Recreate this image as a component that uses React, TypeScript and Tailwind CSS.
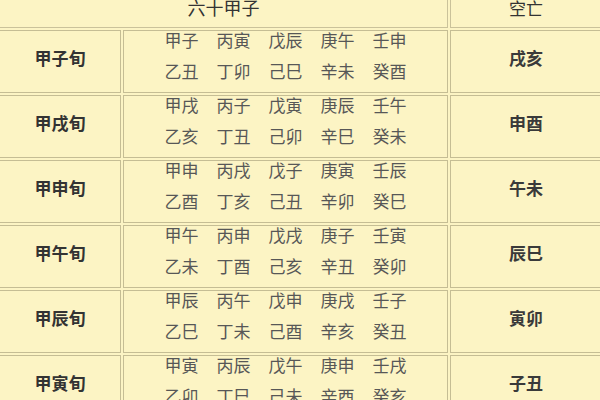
import React from "react";

const rows: { name: string; top: string[]; bottom: string[]; kong: string }[] = [
  { name: "甲子旬", top: ["甲子", "丙寅", "戊辰", "庚午", "壬申"], bottom: ["乙丑", "丁卯", "己巳", "辛未", "癸酉"], kong: "戌亥" },
  { name: "甲戌旬", top: ["甲戌", "丙子", "戊寅", "庚辰", "壬午"], bottom: ["乙亥", "丁丑", "己卯", "辛巳", "癸未"], kong: "申酉" },
  { name: "甲申旬", top: ["甲申", "丙戌", "戊子", "庚寅", "壬辰"], bottom: ["乙酉", "丁亥", "己丑", "辛卯", "癸巳"], kong: "午未" },
  { name: "甲午旬", top: ["甲午", "丙申", "戊戌", "庚子", "壬寅"], bottom: ["乙未", "丁酉", "己亥", "辛丑", "癸卯"], kong: "辰巳" },
  { name: "甲辰旬", top: ["甲辰", "丙午", "戊申", "庚戌", "壬子"], bottom: ["乙巳", "丁未", "己酉", "辛亥", "癸丑"], kong: "寅卯" },
  { name: "甲寅旬", top: ["甲寅", "丙辰", "戊午", "庚申", "壬戌"], bottom: ["乙卯", "丁巳", "己未", "辛酉", "癸亥"], kong: "子丑" },
];

export default function App() {
  return (
    <div
      className="w-[600px] h-[400px] overflow-hidden bg-[#fcf4c4]"
      style={{ fontFamily: '"Noto Sans CJK SC", "Noto Sans", sans-serif' }}
    >
      <div className="flex flex-col gap-[2px] -ml-[1px] -mt-[12px] w-[603px]">
        {/* header */}
        <div className="flex gap-[2px] h-[40px]">
          <div className="w-[449px] border border-[#cac29a] flex items-center justify-center pb-[2px] text-[18px] text-[#333] leading-none">
            六十甲子
          </div>
          <div className="w-[152px] border border-[#cac29a] flex items-center justify-center pb-[2px] text-[17px] text-[#333] leading-none">
            空亡
          </div>
        </div>
        {rows.map((r) => (
          <div key={r.name} className="flex gap-[2px] h-[63px] shrink-0">
            <div className="w-[122px] border border-[#c5bd94] flex items-center justify-center pb-[8px] text-[17px] font-bold text-[#333]">
              {r.name}
            </div>
            <div className="w-[325px] border border-[#c5bd94] flex flex-col justify-center pb-[14px] text-[17px] text-[#575757] leading-[31px]">
              <div className="flex justify-center gap-[18px]">
                {r.top.map((t) => (
                  <span key={t}>{t}</span>
                ))}
              </div>
              <div className="flex justify-center gap-[18px]">
                {r.bottom.map((t) => (
                  <span key={t}>{t}</span>
                ))}
              </div>
            </div>
            <div className="w-[152px] border border-[#c5bd94] flex items-center justify-center pb-[8px] text-[17px] font-bold text-[#3a3a3a]">
              {r.kong}
            </div>
          </div>
        ))}
      </div>
    </div>
  );
}
